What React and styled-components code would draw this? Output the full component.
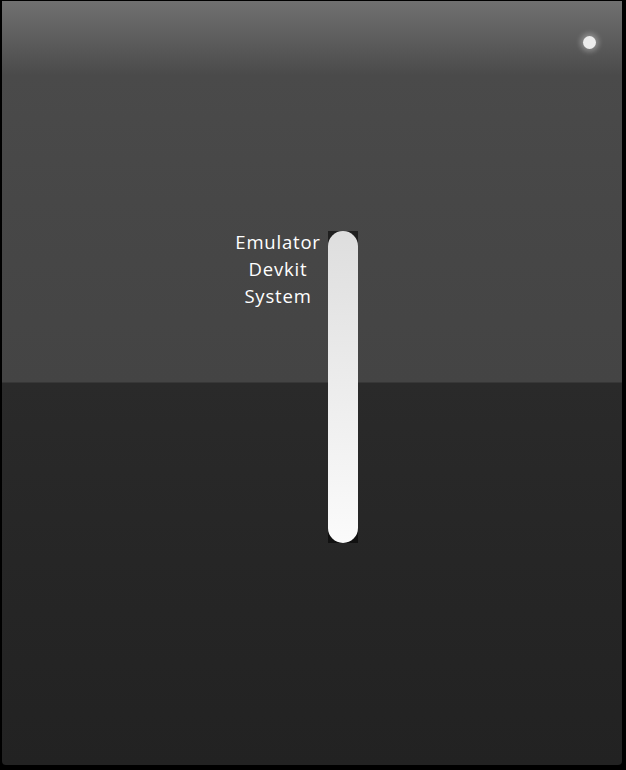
import styled, { createGlobalStyle } from "styled-components";

const GlobalStyle = createGlobalStyle`
  html, body {
    margin: 0;
    padding: 0;
    background: #000;
  }
  #root {
    width: 626px;
    height: 770px;
  }
`;

const Panel = styled.div`
  position: relative;
  box-sizing: border-box;
  margin: 1px 4px 0 2px;
  width: 620px;
  height: 764px;
  border-radius: 0 0 4px 4px;
  overflow: hidden;
  background:
    linear-gradient(
      to bottom,
      #707070 0px,
      #5c5c5c 40px,
      #4a4a4a 75px,
      #474747 200px,
      #444444 381px,
      #2a2a2a 382px,
      #262626 560px,
      #222222 764px
    );
  font-family: "Open Sans", "Noto Sans", sans-serif;
`;

const Content = styled.div`
  display: flex;
  align-items: flex-start;
  padding: 230px 0 0 231px;
`;

const Label = styled.div`
  width: 90px;
  margin-right: 5px;
  color: #fff;
  font-size: 18.5px;
  letter-spacing: 0.8px;
  line-height: 27px;
  text-align: center;
  margin-top: -3px;
`;

const Track = styled.div`
  width: 30px;
  height: 312px;
  background: rgba(0, 0, 0, 0.55);
`;

const Fill = styled.div`
  height: 100%;
  border-radius: 15px;
  background: linear-gradient(to bottom, #dedede, #fbfbfb);
`;

const Led = styled.div`
  position: absolute;
  top: 35px;
  right: 26px;
  width: 13px;
  height: 13px;
  border-radius: 50%;
  background: #ececec;
  box-shadow: 0 0 5px 3px rgba(255, 255, 255, 0.28);
`;

export default function App() {
  return (
    <>
      <GlobalStyle />
      <Panel>
        <Led />
        <Content>
          <Label>
            Emulator
            <br />
            Devkit
            <br />
            System
          </Label>
          <Track>
            <Fill />
          </Track>
        </Content>
      </Panel>
    </>
  );
}
